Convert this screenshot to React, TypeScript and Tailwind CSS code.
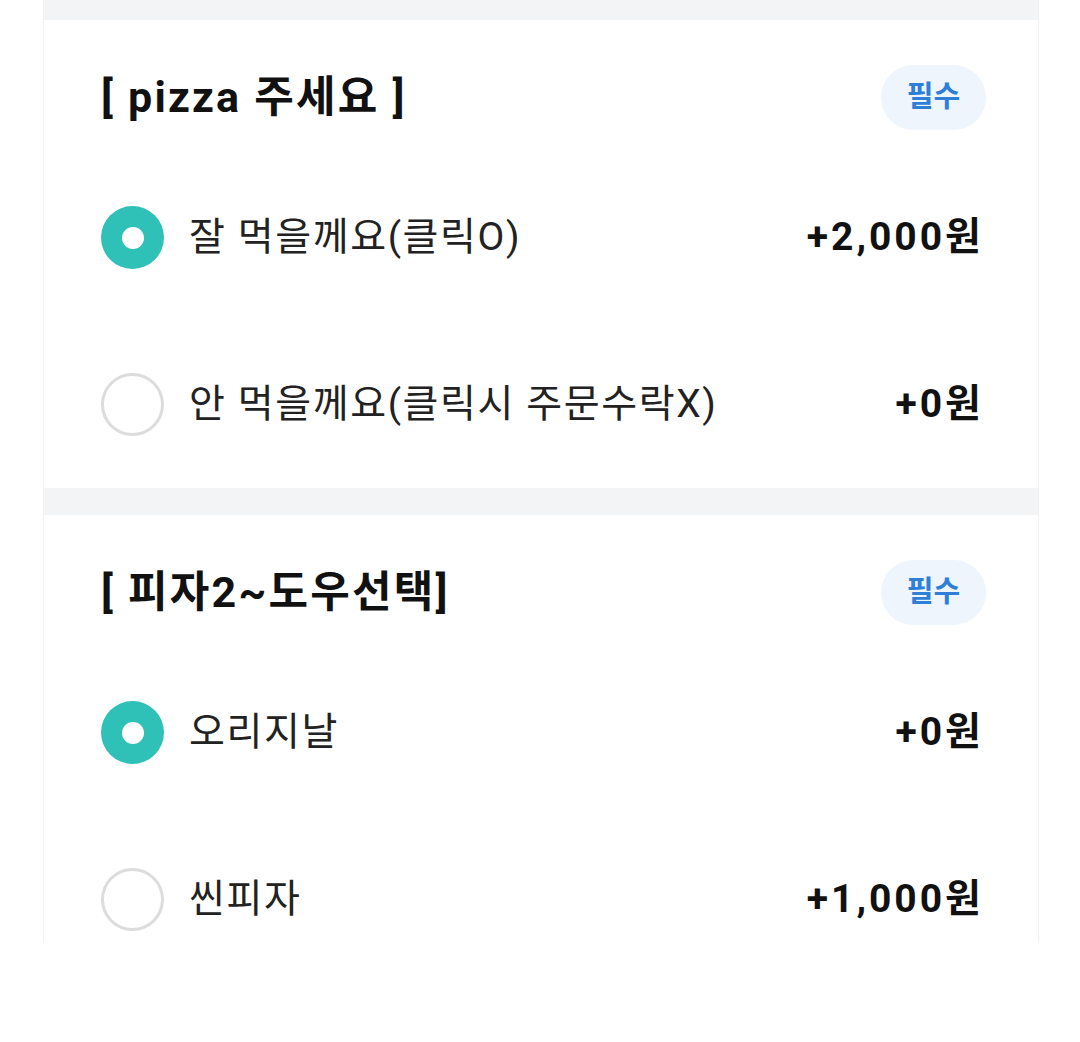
import React from "react";

type Option = { label: string; price: string; checked?: boolean };
type Group = { title: string; options: Option[] };

const groups: Group[] = [
  {
    title: "[ pizza 주세요 ]",
    options: [
      { label: "잘 먹을께요(클릭O)", price: "+2,000원", checked: true },
      { label: "안 먹을께요(클릭시 주문수락X)", price: "+0원" },
    ],
  },
  {
    title: "[ 피자2~도우선택]",
    options: [
      { label: "오리지날", price: "+0원", checked: true },
      { label: "씬피자", price: "+1,000원" },
    ],
  },
];

function Radio({ checked }: { checked?: boolean }) {
  if (checked) {
    return (
      <span className="flex h-[63px] w-[63px] shrink-0 items-center justify-center rounded-full bg-[#2fc0b8]">
        <span className="h-[22px] w-[22px] rounded-full bg-white" />
      </span>
    );
  }
  return <span className="h-[63px] w-[63px] shrink-0 rounded-full border-[3px] border-[#dcdcdc] bg-white" />;
}

function OptionGroup({ group }: { group: Group }) {
  return (
    <section className="bg-white px-[57px] pt-[45px]">
      <div className="flex h-[65px] items-center justify-between">
        <h2 className="text-[43px] font-bold tracking-[2.2px] text-[#111]">{group.title}</h2>
        <span className="mr-[-5px] flex h-[65px] w-[105px] items-center justify-center rounded-full bg-[#eef5fc] text-[29px] font-bold text-[#2f7fd8]">
          필수
        </span>
      </div>
      <ul className="mt-[24px]">
        {group.options.map((o) => (
          <li key={o.label} className="flex h-[167px] items-center">
            <Radio checked={o.checked} />
            <span className="ml-[25px] flex-1 text-[39px] tracking-[1.6px] text-[#222]">{o.label}</span>
            <span className="mr-[-3px] text-[39px] font-bold tracking-[3px] text-[#111]">{o.price}</span>
          </li>
        ))}
      </ul>
    </section>
  );
}

export default function App() {
  return (
    <div
      className="min-h-[1042px] w-[1080px] bg-white"
      style={{ fontFamily: "Roboto, 'Noto Sans CJK KR', sans-serif" }}
    >
      <div className="ml-[43px] flex h-[943px] w-[996px] flex-col overflow-hidden border-x border-[#f1f1f1] bg-[#f2f4f5]">
        <div className="h-[20px] shrink-0" />
        <OptionGroup group={groups[0]} />
        <div className="h-[27px] shrink-0" />
        <OptionGroup group={groups[1]} />
      </div>
    </div>
  );
}
